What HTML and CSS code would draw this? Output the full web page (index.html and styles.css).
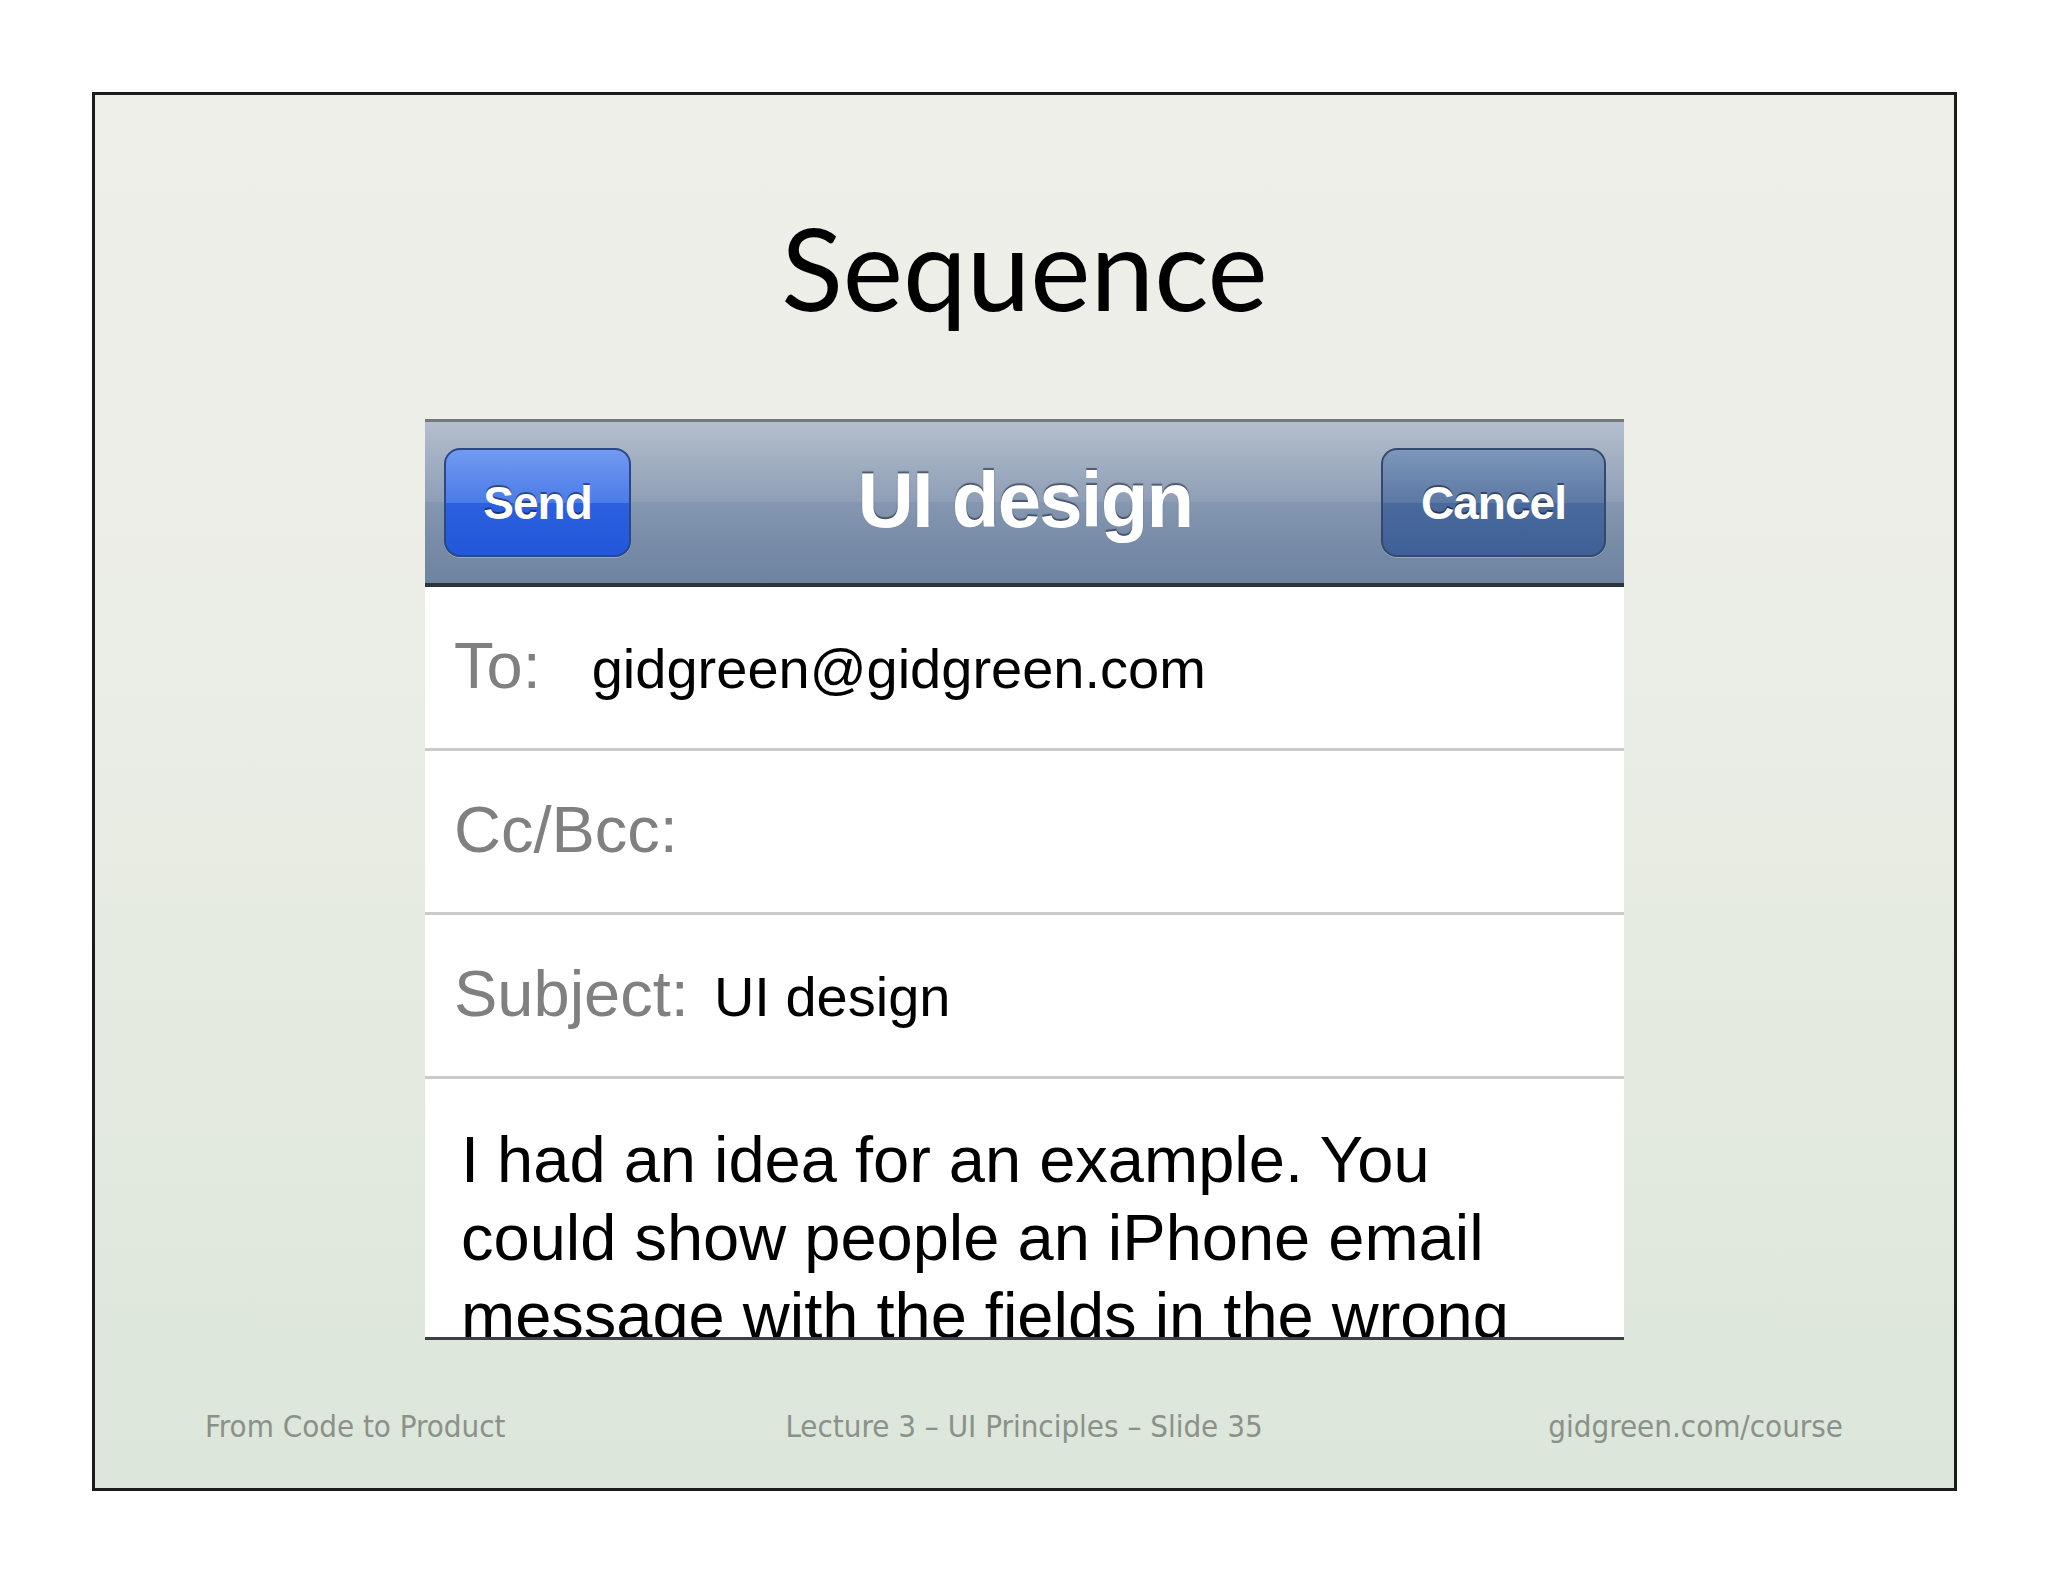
FILE: index.html
```html
<!DOCTYPE html>
<html lang="en">
<head>
<meta charset="utf-8">
<title>Sequence</title>
<link rel="stylesheet" href="styles.css">
</head>
<body>
<div class="slide">
  <h1 class="title">Sequence</h1>
  <div class="phone">
    <div class="navbar">
      <div class="btn btn-send">Send</div>
      <div class="nav-title">UI design</div>
      <div class="btn btn-cancel">Cancel</div>
    </div>
    <div class="field"><span class="label label-to">To:</span><span class="value">gidgreen@gidgreen.com</span></div>
    <div class="field"><span class="label">Cc/Bcc:</span></div>
    <div class="field"><span class="label label-subject">Subject:</span><span class="value">UI design</span></div>
    <div class="body-text">I had an idea for an example. You could show people an iPhone email message with the fields in the wrong order, and ask them what is wrong with it.</div>
  </div>
  <div class="footer">
    <span class="foot-left">From Code to Product</span>
    <span class="foot-center">Lecture 3 – UI Principles – Slide 35</span>
    <span class="foot-right">gidgreen.com/course</span>
  </div>
</div>
</body>
</html>
```
FILE: styles.css
```css
html, body {
  margin: 0;
  padding: 0;
  background: #ffffff;
}

.slide {
  box-sizing: border-box;
  width: 1865px;
  height: 1399px;
  margin: 92px 0 0 92px;
  border: 3px solid #1b1b1b;
  background: linear-gradient(180deg, #efefea 0%, #eaede5 45%, #dce6da 100%);
  display: flex;
  flex-direction: column;
}

.title {
  margin: 0;
  padding-top: 115px;
  font-family: Lato, "Open Sans", sans-serif;
  font-weight: 400;
  font-size: 114px;
  line-height: 114px;
  text-align: center;
  color: #000000;
}

.phone {
  width: 1199px;
  margin: 95px auto 0;
  background: #ffffff;
}

.navbar {
  box-sizing: border-box;
  height: 168px;
  border-top: 3px solid #76797c;
  border-bottom: 4px solid #2c333d;
  background: linear-gradient(180deg, #b4bfce 0%, #9dabbf 30%, #8e9eb6 50%, #8597b0 50%, #788ca8 75%, #6d83a1 100%);
  display: grid;
  grid-template-columns: 1fr auto 1fr;
  align-items: center;
  padding: 0 18px 0 19px;
}

.btn {
  box-sizing: border-box;
  height: 109px;
  border-radius: 16px;
  font-family: "Liberation Sans", Arial, sans-serif;
  font-weight: 700;
  font-size: 46px;
  line-height: 1;
  letter-spacing: -1px;
  color: #ffffff;
  display: flex;
  align-items: center;
  justify-content: center;
  text-shadow: 0 -2px 0 rgba(0, 0, 0, 0.45);
  box-shadow: 0 1px 0 rgba(255, 255, 255, 0.25);
}

.btn-send {
  width: 187px;
  justify-self: start;
  border: 2px solid #2a4789;
  background: linear-gradient(180deg, #729af0 0%, #4b7be8 50%, #2c60e0 50%, #2157d8 100%);
}

.btn-cancel {
  width: 225px;
  justify-self: end;
  border: 2px solid #34496e;
  background: linear-gradient(180deg, #7d96b9 0%, #5c79a5 50%, #4a6a9d 50%, #3f6096 100%);
}

.nav-title {
  font-family: "Liberation Sans", Arial, sans-serif;
  font-weight: 700;
  font-size: 78px;
  line-height: 1;
  letter-spacing: -1.8px;
  color: #ffffff;
  text-shadow: 0 -2px 1px rgba(45, 55, 75, 0.7);
  padding-bottom: 6px;
}

.field {
  box-sizing: border-box;
  height: 164px;
  border-bottom: 3px solid #cbcbcb;
  display: flex;
  align-items: baseline;
  padding: 47px 0 0 29px;
  font-family: "Liberation Sans", Arial, sans-serif;
}

.label {
  font-size: 65px;
  line-height: 64px;
  color: #808080;
}

.label-to {
  margin-right: 51px;
}

.label-subject {
  margin-right: 25px;
}

.value {
  font-size: 56px;
  line-height: 64px;
  color: #000000;
}

.body-text {
  box-sizing: border-box;
  height: 261px;
  border-bottom: 3px solid #3b4046;
  overflow: hidden;
  padding: 42px 64px 0 36px;
  font-family: "Liberation Sans", Arial, sans-serif;
  font-size: 65px;
  line-height: 78px;
  color: #000000;
}

.footer {
  margin-top: 68px;
  display: grid;
  grid-template-columns: 1fr auto 1fr;
  column-gap: 20px;
  padding: 0 111px 0 110px;
  font-family: "DejaVu Sans Condensed", "DejaVu Sans", sans-serif;
  font-stretch: condensed;
  font-size: 31px;
  line-height: 37px;
  color: #8b918a;
}

.foot-left {
  justify-self: start;
}

.foot-center {
  justify-self: center;
}

.foot-right {
  justify-self: end;
}
```
